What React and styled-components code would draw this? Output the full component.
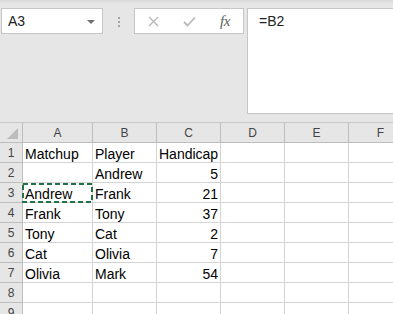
import React from "react"
import styled, { createGlobalStyle } from "styled-components"

const GlobalStyle = createGlobalStyle`
  html, body {
    margin: 0;
    padding: 0;
    overflow: hidden;
    background: #ffffff;
    font-family: "Liberation Sans", Arial, sans-serif;
  }
`

const Sheet = styled.div`
  width: 393px;
  height: 314px;
  overflow: hidden;
  background: #ffffff;
`

const FormulaBar = styled.div`
  display: flex;
  align-items: flex-start;
  height: 123px;
  padding: 8px 0 0 1px;
  box-sizing: border-box;
  background: linear-gradient(#d9d9d9, #e6e6e6 4px);
  border-bottom: 1px solid #c8c8c8;
`

const NameBox = styled.div`
  display: flex;
  align-items: center;
  justify-content: space-between;
  width: 102px;
  height: 26px;
  box-sizing: border-box;
  padding: 0 7px 0 6px;
  background: #ffffff;
  border: 1px solid #c6c6c6;
  font-size: 14px;
  line-height: 16px;
  color: #222222;
`

const Caret = styled.span`
  width: 0;
  height: 0;
  border-left: 4px solid transparent;
  border-right: 4px solid transparent;
  border-top: 4px solid #707070;
  margin-top: 1px;
`

const Grip = styled.div`
  display: flex;
  flex-direction: column;
  gap: 2px;
  width: 2px;
  margin: 9px 14px 0 15px;
  span {
    width: 2px;
    height: 2px;
    background: #a6a6a6;
  }
`

const ButtonBox = styled.div`
  display: flex;
  height: 26px;
  box-sizing: border-box;
  background: #ffffff;
  border: 1px solid #c6c6c6;
`

const BarButton = styled.div`
  display: flex;
  align-items: center;
  justify-content: center;
  width: 36px;
  height: 24px;
  color: ${p => (p.$active ? "#555555" : "#b9b9b9")};
`

const Fx = styled.span`
  font-family: "Liberation Serif", "Times New Roman", serif;
  font-style: italic;
  font-size: 15px;
  letter-spacing: -0.5px;
  color: #5e5e5e;
`

const FormulaInput = styled.div`
  flex: 1;
  margin-left: 3px;
  height: 106px;
  box-sizing: border-box;
  padding: 4px 0 0 11px;
  background: #ffffff;
  border: 1px solid #c6c6c6;
  border-right: none;
  font-size: 14px;
  line-height: 16px;
  color: #222222;
`

const Grid = styled.div`
  display: grid;
  grid-template-columns: 23px 70px repeat(5, 64px);
  grid-auto-rows: 20px;
  width: 412px;
`

const HeadCell = styled.div`
  display: flex;
  align-items: center;
  justify-content: center;
  box-sizing: border-box;
  background: #e6e6e6;
  border-right: 1px solid #bdbdbd;
  border-bottom: 1px solid #bdbdbd;
  font-size: 12px;
  color: #444444;
`

const Corner = styled(HeadCell)`
  position: relative;
  &::after {
    content: "";
    position: absolute;
    right: 4px;
    bottom: 3px;
    width: 0;
    height: 0;
    border-left: 11px solid transparent;
    border-bottom: 11px solid #bcbcbc;
  }
`

const RowNum = styled(HeadCell)`
  align-items: flex-end;
  padding-bottom: 1px;
  line-height: 16px;
`

const Cell = styled.div`
  position: relative;
  display: flex;
  align-items: flex-end;
  justify-content: ${p => (p.$num ? "flex-end" : "flex-start")};
  box-sizing: border-box;
  padding: 0 2px 0 2px;
  border-right: 1px solid #d4d4d4;
  border-bottom: 1px solid #d4d4d4;
  font-size: 14px;
  line-height: 16px;
  color: #000000;
  white-space: nowrap;
`

const CopyMarquee = styled.svg`
  position: absolute;
  left: -1px;
  top: 0;
  width: 71px;
  height: 20px;
  overflow: visible;
  pointer-events: none;
`

const columns = ["A", "B", "C", "D", "E", "F"]

const rows = [
  ["Matchup", "Player", "Handicap"],
  ["", "Andrew", 5],
  ["Andrew", "Frank", 21],
  ["Frank", "Tony", 37],
  ["Tony", "Cat", 2],
  ["Cat", "Olivia", 7],
  ["Olivia", "Mark", 54],
  [],
  [],
]

const CrossIcon = () => (
  <svg width="11" height="11" viewBox="0 0 11 11">
    <path d="M1 1L10 10M10 1L1 10" stroke="currentColor" strokeWidth="1.4" fill="none" />
  </svg>
)

const CheckIcon = () => (
  <svg width="13" height="11" viewBox="0 0 13 11">
    <path d="M1 6L4.5 9.5L12 1.5" stroke="currentColor" strokeWidth="1.8" fill="none" />
  </svg>
)

export default function App() {
  return (
    <Sheet>
      <GlobalStyle />
      <FormulaBar>
        <NameBox>
          A3
          <Caret />
        </NameBox>
        <Grip>
          <span />
          <span />
          <span />
        </Grip>
        <ButtonBox>
          <BarButton><CrossIcon /></BarButton>
          <BarButton><CheckIcon /></BarButton>
          <BarButton $active><Fx>fx</Fx></BarButton>
        </ButtonBox>
        <FormulaInput>=B2</FormulaInput>
      </FormulaBar>
      <Grid>
        <Corner />
        {columns.map(c => (
          <HeadCell key={c}>{c}</HeadCell>
        ))}
        {rows.map((row, r) => (
          <React.Fragment key={r}>
            <RowNum>{r + 1}</RowNum>
            {columns.map((c, i) => {
              const value = row[i]
              const isNum = typeof value === "number"
              return (
                <Cell key={c} $num={isNum}>
                  {value}
                  {r === 2 && i === 0 && (
                    <CopyMarquee viewBox="0 0 71 20">
                      <rect
                        x="1"
                        y="1"
                        width="69"
                        height="18"
                        fill="none"
                        stroke="#217346"
                        strokeWidth="2"
                        strokeDasharray="5 3"
                      />
                    </CopyMarquee>
                  )}
                </Cell>
              )
            })}
          </React.Fragment>
        ))}
      </Grid>
    </Sheet>
  )
}
